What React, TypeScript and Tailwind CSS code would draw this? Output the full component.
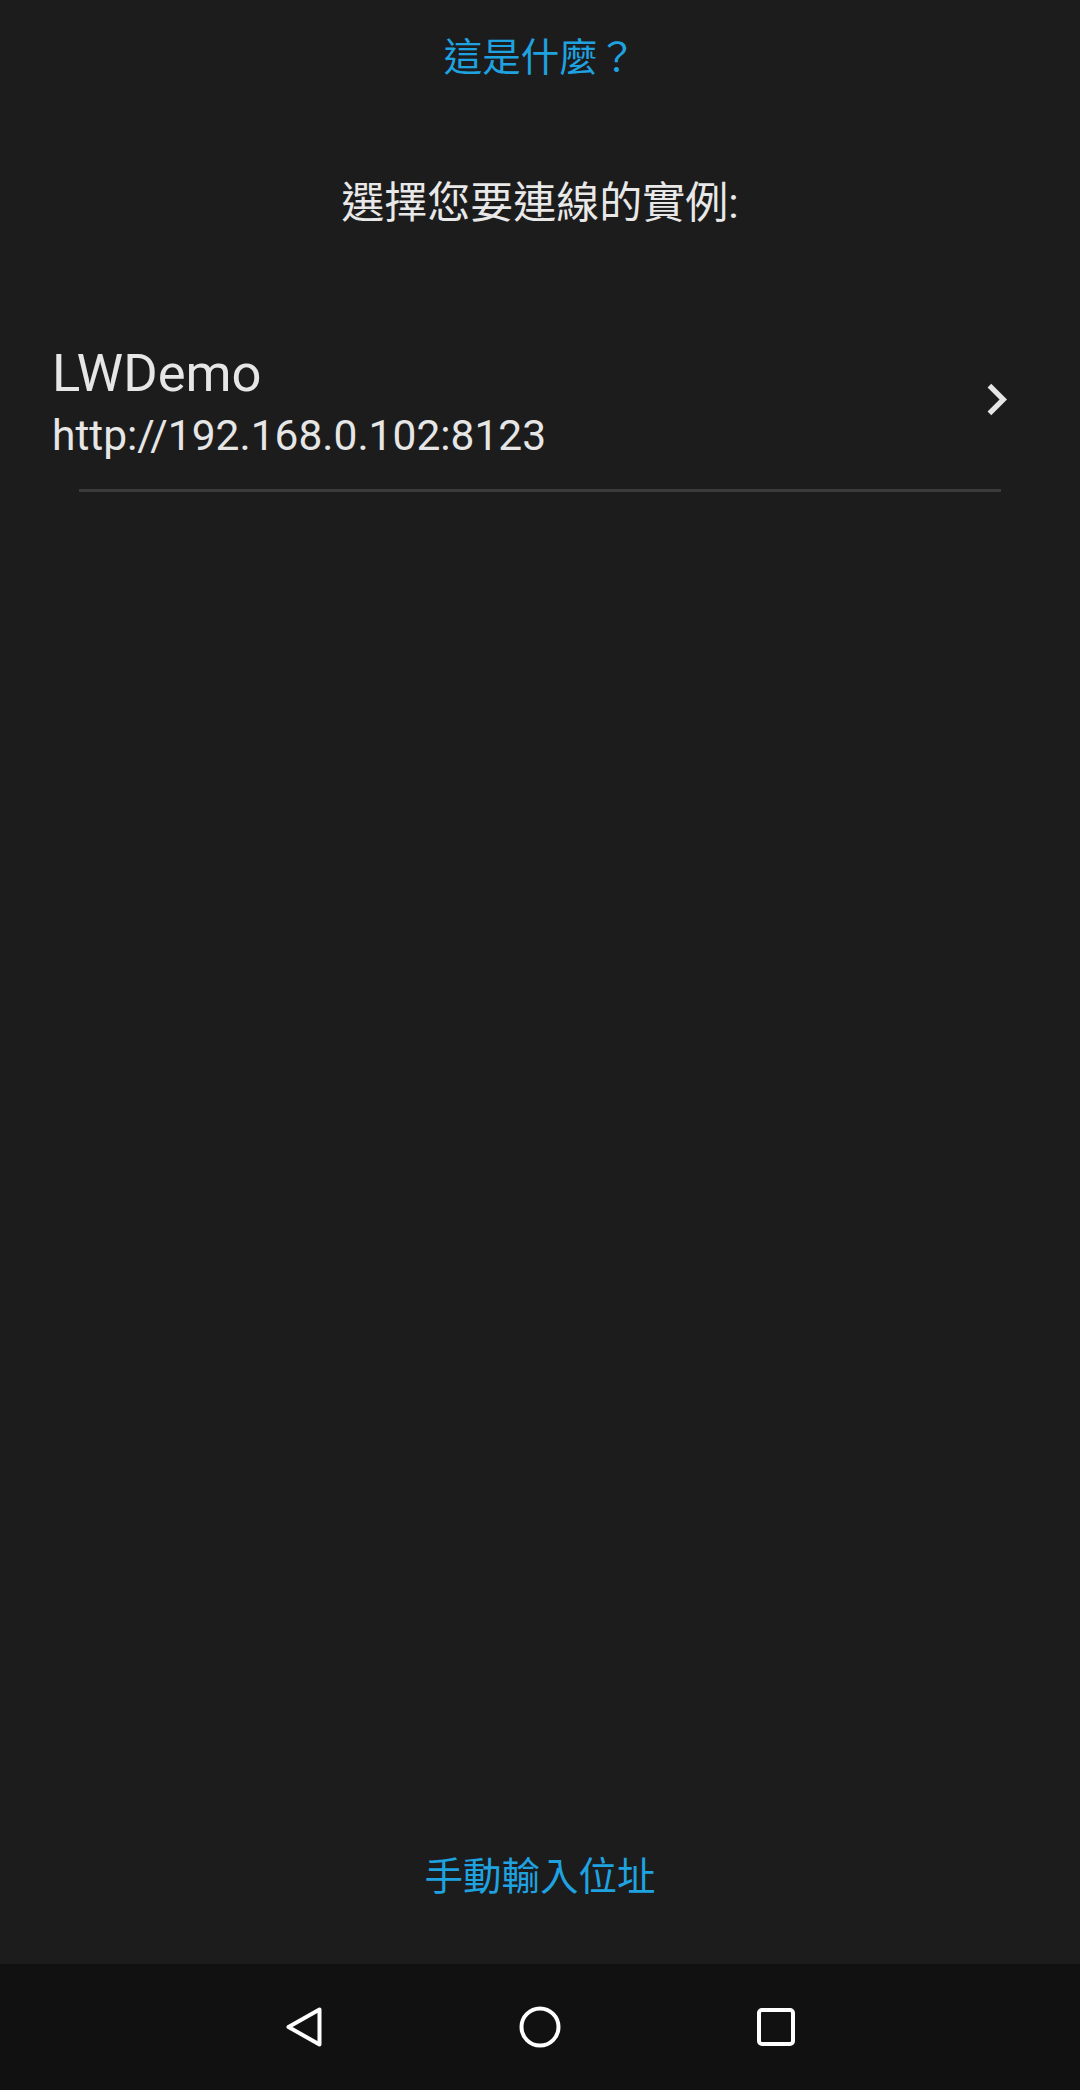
import React from 'react';

const FONT = "font-['Roboto','Noto_Sans_CJK_TC',sans-serif]";

function BackIcon() {
  return (
    <svg width="48" height="48" viewBox="0 0 48 48" fill="none">
      <path d="M39.5 6.5 L39.5 41.5 L8.5 24 Z" stroke="#ffffff" strokeWidth="4" strokeLinejoin="round" />
    </svg>
  );
}

function HomeIcon() {
  return (
    <svg width="48" height="48" viewBox="0 0 48 48" fill="none">
      <circle cx="24" cy="24" r="18.5" stroke="#ffffff" strokeWidth="4" />
    </svg>
  );
}

function RecentsIcon() {
  return (
    <svg width="48" height="48" viewBox="0 0 48 48" fill="none">
      <rect x="7" y="7" width="34" height="34" rx="3" stroke="#ffffff" strokeWidth="4" />
    </svg>
  );
}

function ChevronRight() {
  return (
    <svg width="63" height="63" viewBox="0 0 24 24" fill="#e6e6e6">
      <path d="M10 6L8.59 7.41 13.17 12l-4.58 4.59L10 18l6-6z" />
    </svg>
  );
}

export default function App() {
  return (
    <div className={`flex h-[2090px] w-[1080px] flex-col bg-[#1c1c1c] ${FONT}`}>
      <div className="flex flex-1 flex-col">
        {/* Help link */}
        <div className="pt-[33px] text-center text-[38.5px] leading-[50px] text-[#1fa2e0]">這是什麼？</div>

        {/* Heading */}
        <div className="mt-[92px] text-center text-[43px] leading-[56px] text-[#e8e8e8]">選擇您要連線的實例:</div>

        {/* Instance list */}
        <div className="mt-[111px]">
          <div className="flex items-center pl-[52px] pr-[52px]">
            <div className="flex-1">
              <div className="text-[52.5px] leading-[62px] text-[#e6e6e6]">LWDemo</div>
              <div className="mt-[4px] text-[42.5px] leading-[56px] text-[#e6e6e6]">http://192.168.0.102:8123</div>
            </div>
            <div className="mb-[8px]">
              <ChevronRight />
            </div>
          </div>
          <div className="ml-[79px] mt-[25px] h-[3px] w-[922px] bg-[#3b3b3b]" />
        </div>

        <div className="flex-1" />

        {/* Manual entry */}
        <div className="pb-[62px] text-center text-[38.5px] leading-[50px] text-[#1fa2e0]">手動輸入位址</div>
      </div>

      {/* Android navigation bar */}
      <div className="flex h-[126px] items-center justify-center gap-[188px] bg-[#111111]">
        <BackIcon />
        <HomeIcon />
        <RecentsIcon />
      </div>
    </div>
  );
}
